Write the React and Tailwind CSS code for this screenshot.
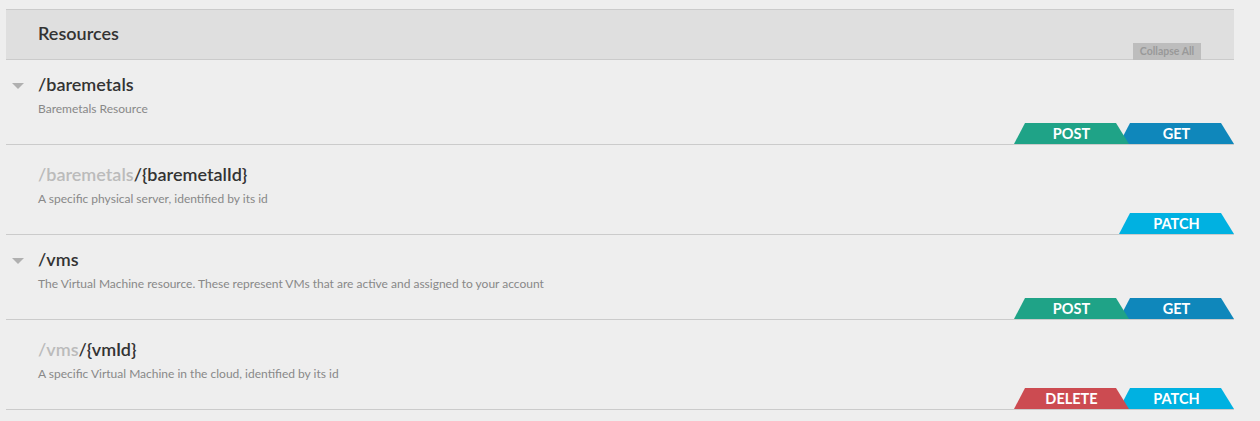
import React from "react";

const tabColors = {
  POST: "bg-[#1fa387]",
  GET: "bg-[#0f87bb]",
  PATCH: "bg-[#00b1e1]",
  DELETE: "bg-[#cc4b51]",
};

function Tab({ method, first }) {
  return (
    <div
      className={`${tabColors[method]} ${first ? "relative z-10" : "-ml-[10px]"} h-[21px] w-[115px] pt-px flex items-center justify-center text-white text-[14.5px] font-bold leading-none [clip-path:polygon(11px_0,102px_0,115px_100%,0_100%)]`}
    >
      {method}
    </div>
  );
}

function Row({ sub, prefix, name, desc, methods }) {
  return (
    <div className={`relative border-b border-[#cbcbcb] ${sub ? "pt-[17px]" : "pt-[12px]"}`}>
      {!sub && (
        <div className="absolute left-[6px] top-[23px] w-0 h-0 border-l-[6px] border-r-[6px] border-t-[6px] border-l-transparent border-r-transparent border-t-[#b0b0b0]" />
      )}
      <div className="pl-[32px] h-[24px] leading-[24px] text-[18px] font-semibold text-[#333]">
        {prefix && <span className="text-[#bbbbbb]">{prefix}</span>}
        {name}
      </div>
      <div className="pl-[32px] mt-[5px] h-[16px] leading-[16px] text-[12px] text-[#888]">{desc}</div>
      <div className="mt-[6px] flex justify-end">
        {methods.map((m, i) => (
          <Tab key={m} method={m} first={i === 0 && methods.length > 1} />
        ))}
      </div>
    </div>
  );
}

export default function App() {
  return (
    <div className="min-h-[421px] w-full bg-[#eeeeee] font-['Lato',sans-serif] pt-[9px]">
      <div className="ml-[6px] w-[1228px]">
        <div className="relative bg-[#dfdfdf] border-t border-b border-[#cbcbcb] pt-[11px] pb-[14px] pl-[32px]">
          <div className="h-[24px] leading-[24px] text-[18px] font-semibold text-[#333]">Resources</div>
          <div className="absolute right-[33px] -bottom-px w-[68px] h-[17px] bg-[#bdbdbd] flex items-center justify-center text-[10.5px] font-bold text-[#999] leading-none">
            Collapse All
          </div>
        </div>
        <Row name="/baremetals" desc="Baremetals Resource" methods={["POST", "GET"]} />
        <Row
          sub
          prefix="/baremetals"
          name="/{baremetalId}"
          desc="A specific physical server, identified by its id"
          methods={["PATCH"]}
        />
        <Row
          name="/vms"
          desc="The Virtual Machine resource. These represent VMs that are active and assigned to your account"
          methods={["POST", "GET"]}
        />
        <Row
          sub
          prefix="/vms"
          name="/{vmId}"
          desc="A specific Virtual Machine in the cloud, identified by its id"
          methods={["DELETE", "PATCH"]}
        />
      </div>
    </div>
  );
}
